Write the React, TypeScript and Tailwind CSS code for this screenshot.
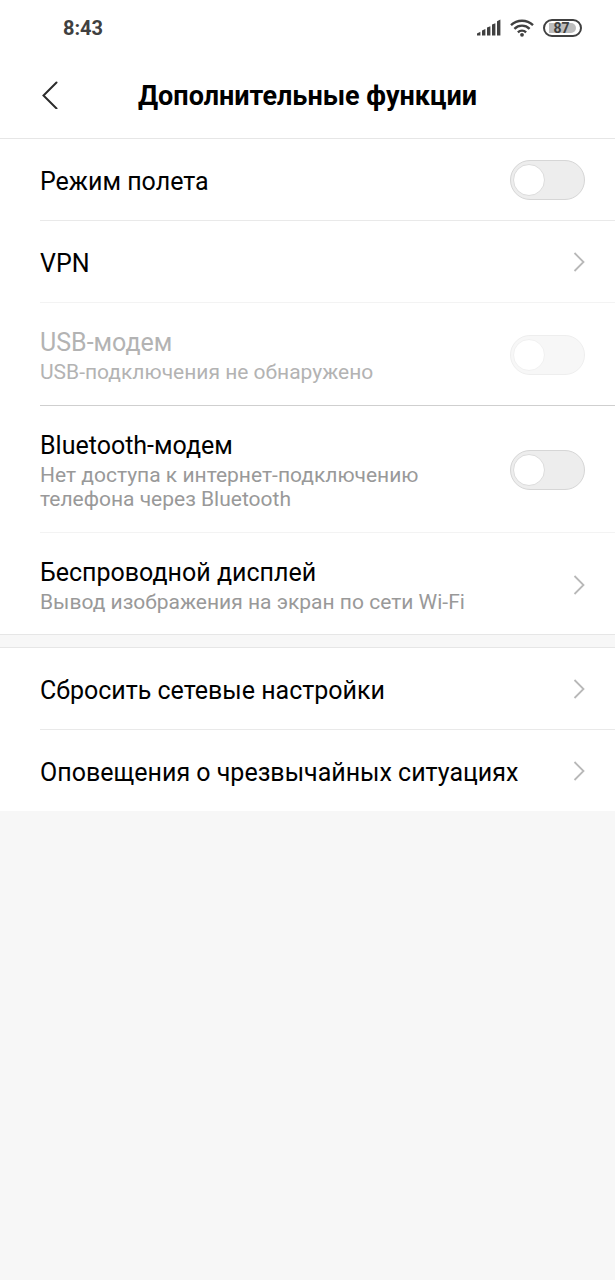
// src/App.tsx
import clsx from 'clsx';

interface SettingItem {
  id: string;
  title: string;
  description?: string;
  type: 'toggle' | 'link';
  disabled?: boolean;
  divider?: string;
}

const connectionItems: SettingItem[] = [
  { id: 'airplane', title: 'Режим полета', type: 'toggle', divider: 'border-[#e9e9e9]' },
  { id: 'vpn', title: 'VPN', type: 'link', divider: 'border-[#f3f3f3]' },
  {
    id: 'usb',
    title: 'USB-модем',
    description: 'USB-подключения не обнаружено',
    type: 'toggle',
    disabled: true,
    divider: 'border-[#cfcfcf]',
  },
  {
    id: 'bluetooth',
    title: 'Bluetooth-модем',
    description: 'Нет доступа к интернет-подключению телефона через Bluetooth',
    type: 'toggle',
    divider: 'border-[#f3f3f3]',
  },
  {
    id: 'display',
    title: 'Беспроводной дисплей',
    description: 'Вывод изображения на экран по сети Wi-Fi',
    type: 'link',
  },
];

const otherItems: SettingItem[] = [
  { id: 'reset', title: 'Сбросить сетевые настройки', type: 'link', divider: 'border-[#e9e9e9]' },
  { id: 'alerts', title: 'Оповещения о чрезвычайных ситуациях', type: 'link' },
];

function StatusBar() {
  return (
    <div className="flex h-14 items-center justify-between pl-[63px] pr-[33px] text-[#404040]">
      <span className="text-xl font-bold">8:43</span>
      <div className="flex items-center gap-[9px] pb-px">
        {/* Signal */}
        <svg className="h-[17px] w-6" viewBox="0 0 24 17" fill="currentColor">
          <path d="M0 16.5v-2l3.4-1.8v3.8z" />
          <path d="M5 16.5v-5l3.4-1.4v6.4z" />
          <path d="M10 16.5V8.6l3.4-1.4v9.3z" />
          <path d="M15 16.5V5.6l3.4-1.4v12.3z" />
          <path d="M20 16.5V2.2L23.4.6v15.9z" />
        </svg>
        {/* Wi-Fi */}
        <svg className="h-[18px] w-6" viewBox="0 0 24 18" fill="none" stroke="currentColor" strokeWidth="2.4">
          <path d="M1 6.2a15.8 15.8 0 0 1 22 0" />
          <path d="M4.4 9.8a10.8 10.8 0 0 1 15.2 0" />
          <path d="M7.9 13.3a5.9 5.9 0 0 1 8.2 0" />
          <circle cx="12" cy="15.8" r="1.9" fill="currentColor" stroke="none" />
        </svg>
        {/* Battery */}
        <div className="flex h-[18px] w-[39px] items-center rounded-full border-2 border-[#404040] px-1 py-[2px]">
          <div className="flex h-full flex-1 items-center justify-center rounded-l rounded-r-full bg-[#bdbdbd] pr-0.5 text-sm leading-none font-bold">
            87
          </div>
        </div>
      </div>
    </div>
  );
}

function Header() {
  return (
    <header className="border-b border-[#e6e6e6] bg-white">
      <StatusBar />
      <div className="flex h-[82px] items-center px-10">
        <button type="button" aria-label="Назад" className="flex w-10 items-center pb-1">
          <svg className="h-7 w-[18px]" viewBox="0 0 18 28" fill="none" stroke="#2b2b2b" strokeWidth="2" strokeLinecap="round">
            <path d="M16.5 1.5 3.5 14.5l13 13" />
          </svg>
        </button>
        <h1 className="flex-1 pr-10 pb-0.5 text-center text-[27px] leading-8 font-bold text-black">
          Дополнительные функции
        </h1>
      </div>
    </header>
  );
}

function ItemText({ item }: { item: SettingItem }) {
  return (
    <span className="block min-w-0 flex-1">
      <span
        className={clsx(
          'block text-[25px]',
          item.description ? 'leading-[35px]' : 'pt-1 leading-[30px]',
          item.disabled ? 'text-[#b3b3b3]' : 'text-black'
        )}
      >
        {item.title}
      </span>
      {item.description && (
        <span
          className={clsx(
            'block max-w-[430px] text-[21px] leading-6',
            item.disabled ? 'text-[#b3b3b3]' : 'text-[#999999]'
          )}
        >
          {item.description}
        </span>
      )}
    </span>
  );
}

function SettingRow({ item }: { item: SettingItem }) {
  const rowClass = clsx(
    'flex w-full items-center gap-6 pr-[30px] text-left',
    !item.description && 'pt-6 pb-[23px]',
    item.description && (item.divider ? 'pt-[22px] pb-[21px]' : 'pt-[22px] pb-5')
  );

  return (
    <li className={clsx('ml-10', item.divider && 'border-b', item.divider)}>
      {item.type === 'toggle' ? (
        <label htmlFor={item.id} className={rowClass}>
          <ItemText item={item} />
          <input
            id={item.id}
            type="checkbox"
            role="switch"
            disabled={item.disabled}
            className={clsx(
              '-my-2 flex h-10 w-[75px] shrink-0 appearance-none items-center rounded-full border border-[#d6d6d6] bg-[#ededed] px-[2px]',
              'before:size-8 before:rounded-full before:border before:border-[#dcdcdc] before:bg-white checked:justify-end checked:bg-[#2f8cff]',
              item.disabled && 'opacity-40'
            )}
          />
        </label>
      ) : (
        <a href={`#${item.id}`} className={rowClass}>
          <ItemText item={item} />
          <svg className="h-5 w-3 shrink-0" viewBox="0 0 12 20" fill="none" stroke="#b8b8b8" strokeWidth="1.8">
            <path d="m1.5 1 9 9-9 9" />
          </svg>
        </a>
      )}
    </li>
  );
}

export default function App() {
  return (
    <div className="min-h-screen bg-[#f7f7f7] font-[Roboto,sans-serif]">
      <Header />
      <main>
        <ul className="border-b border-[#e6e6e6] bg-white">
          {connectionItems.map((item) => (
            <SettingRow key={item.id} item={item} />
          ))}
        </ul>
        <ul className="mt-3 border-t border-[#e6e6e6] bg-white">
          {otherItems.map((item) => (
            <SettingRow key={item.id} item={item} />
          ))}
        </ul>
      </main>
    </div>
  );
}
